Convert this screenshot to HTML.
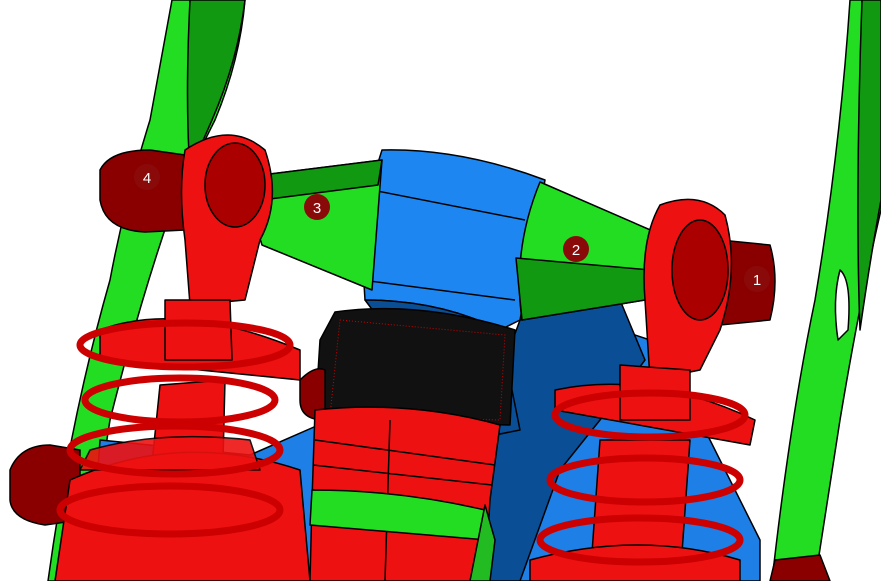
<!DOCTYPE html>
<html><head><meta charset="utf-8"><style>html,body{margin:0;padding:0;background:#fff;width:881px;height:581px;overflow:hidden}svg{display:block}</style></head><body>
<svg width="881" height="581" viewBox="0 0 881 581" xmlns="http://www.w3.org/2000/svg" stroke="#000" stroke-width="1.5" stroke-linejoin="round">
<!-- left green frame -->
<path d="M172 0 L245 0 Q240 60 215 120 L175 200 Q140 300 110 420 L85 581 L48 581 Q70 420 110 280 Q125 200 150 120 Z" fill="#22dd22"/>
<path d="M190 0 L245 0 Q238 60 212 120 L190 170 Q185 100 190 0Z" fill="#129912"/>
<!-- right green frame -->
<path d="M850 0 L881 0 L881 210 Q860 300 840 420 L815 581 L772 581 Q790 420 815 300 Q840 150 850 0Z" fill="#22dd22"/>
<path d="M862 0 L881 0 L881 200 Q870 260 860 330 Q855 200 862 0Z" fill="#129912"/>
<path d="M840 270 Q852 280 848 330 L838 340 Q832 300 840 270Z" fill="#fff"/>
<!-- blue lower body -->
<path d="M100 440 L250 455 L330 420 L520 420 L560 380 L620 330 L650 340 L700 420 L760 540 L760 581 L90 581 Z" fill="#1e7fe6"/>
<path d="M520 320 L620 300 L645 360 L600 420 L560 470 L520 581 L480 581 L480 430 Z" fill="#0a4e96"/>
<!-- blue central block -->
<path d="M382 150 Q460 148 545 180 L520 320 L500 330 Q440 300 365 300 L360 220 Z" fill="#1e86f0"/>
<path d="M365 300 Q440 300 500 330 L520 430 L470 440 Z" fill="#0a4e96"/>
<path d="M372 190 L525 220 M362 280 L515 300" fill="none"/>
<!-- green cones -->
<path d="M262 175 L382 160 L372 290 L262 245 Q250 210 262 175Z" fill="#22dd22"/>
<path d="M262 175 L382 160 L378 185 L262 200Z" fill="#129912"/>
<path d="M540 182 L655 232 Q665 270 645 300 L522 320 Q512 250 540 182Z" fill="#22dd22"/>
<path d="M516 258 L650 270 L645 300 L522 320Z" fill="#129912"/>
<!-- left rod end -->
<path d="M100 170 Q110 150 150 150 L185 155 L185 230 L145 232 Q105 230 100 200Z" fill="#8a0000"/>
<path d="M185 150 Q230 120 265 150 Q282 200 260 240 L245 300 L190 305 L185 240 Q178 190 185 150Z" fill="#ee1111"/>
<ellipse cx="235" cy="185" rx="30" ry="42" fill="#aa0000"/>
<!-- right rod end -->
<path d="M720 240 L770 245 Q780 280 770 320 L720 325Z" fill="#8a0000"/>
<path d="M660 205 Q700 190 725 215 Q740 270 720 330 L700 370 L650 380 L645 300 Q640 240 660 205Z" fill="#ee1111"/>
<ellipse cx="700" cy="270" rx="28" ry="50" fill="#aa0000"/>
<!-- left nut lower -->
<path d="M10 470 Q20 445 50 445 L80 450 L80 520 L45 525 Q12 520 10 500Z" fill="#8a0000"/>
<!-- knurled cylinder -->
<path d="M335 312 Q420 300 515 330 L510 425 L315 420 L320 340Z" fill="#111"/>
<path d="M340 320 L505 335 L500 420 L330 415Z" fill="none" stroke="#c00" stroke-width="1" stroke-dasharray="1 2"/>
<path d="M300 380 Q315 365 325 370 L325 420 Q300 420 300 400Z" fill="#8a0000"/>
<!-- center red cylinder -->
<path d="M315 410 Q410 400 500 425 L490 500 L485 581 L310 581 L312 500Z" fill="#ee1111"/>
<path d="M315 440 L495 465 M313 465 L492 485 M390 420 L385 581" fill="none"/>
<path d="M312 490 Q400 490 485 510 L487 540 L310 525Z" fill="#22dd22"/>
<path d="M485 505 L495 540 L490 581 L470 581Z" fill="#22bb22"/>
<!-- left shock -->
<path d="M100 330 Q180 300 300 350 L300 380 L100 360Z" fill="#ee1111"/>
<path d="M160 385 L225 380 L220 581 L140 581Z" fill="#ee1111"/>
<path d="M165 300 L230 300 L232 360 L165 360Z" fill="#ee1111"/>
<path d="M70 480 Q180 430 300 470 L310 581 L55 581Z" fill="#ee1111"/>
<path d="M90 450 Q160 430 250 440 L260 470 L80 470Z" fill="#ee1111" opacity=".9"/>
<g fill="none" stroke="#cc0000" stroke-width="7">
<ellipse cx="180" cy="400" rx="95" ry="22"/>
<ellipse cx="175" cy="450" rx="105" ry="24"/>
<ellipse cx="170" cy="510" rx="110" ry="24"/>
<ellipse cx="185" cy="345" rx="105" ry="22"/>
</g>
<!-- right shock -->
<path d="M555 390 Q650 370 755 420 L750 445 L555 410Z" fill="#ee1111"/>
<path d="M620 365 L690 370 L690 420 L620 420Z" fill="#ee1111"/>
<path d="M600 440 L690 440 L680 581 L590 581Z" fill="#ee1111"/>
<path d="M530 560 Q640 530 740 560 L740 581 L530 581Z" fill="#ee1111"/>
<g fill="none" stroke="#cc0000" stroke-width="7">
<ellipse cx="650" cy="415" rx="95" ry="22"/>
<ellipse cx="645" cy="480" rx="95" ry="22"/>
<ellipse cx="640" cy="540" rx="100" ry="22"/>
</g>
<path d="M775 560 L820 555 L830 581 L770 581Z" fill="#8a0000"/>
<!-- labels -->
<g stroke="none" fill="#8a0a0a"><circle cx="147" cy="177" r="13"/><circle cx="317" cy="207" r="13"/><circle cx="576" cy="249" r="13"/><circle cx="757" cy="279" r="13"/></g>
<g stroke="none" fill="#fff" font-family="Liberation Sans, sans-serif" font-size="15" text-anchor="middle">
<text x="147" y="183">4</text><text x="317" y="213">3</text><text x="576" y="255">2</text><text x="757" y="285">1</text></g>
</svg>
</body></html>
